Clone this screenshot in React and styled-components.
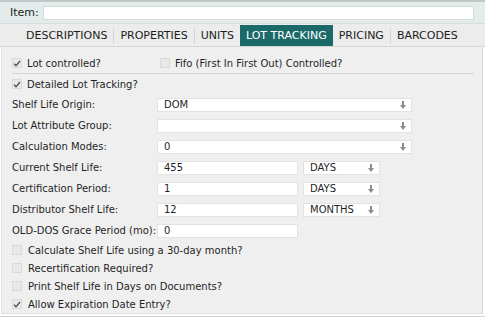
import React from "react"
import styled, { createGlobalStyle } from "styled-components"

const GlobalStyle = createGlobalStyle`
  html, body {
    margin: 0;
    padding: 0;
    background: #ffffff;
  }
  body {
    font-family: "DejaVu Sans", Verdana, sans-serif;
    color: #1f1f1f;
  }
`

const tabs = ["DESCRIPTIONS", "PROPERTIES", "UNITS", "LOT TRACKING", "PRICING", "BARCODES"]
const activeTab = "LOT TRACKING"

const fields = [
  { label: "Shelf Life Origin:", kind: "select", value: "DOM" },
  { label: "Lot Attribute Group:", kind: "select", value: "" },
  { label: "Calculation Modes:", kind: "select", value: "0" },
  { label: "Current Shelf Life:", kind: "input", value: "455", unit: "DAYS" },
  { label: "Certification Period:", kind: "input", value: "1", unit: "DAYS" },
  { label: "Distributor Shelf Life:", kind: "input", value: "12", unit: "MONTHS" },
  { label: "OLD-DOS Grace Period (mo):", kind: "input", value: "0" },
]

const options = [
  { label: "Calculate Shelf Life using a 30-day month?", checked: false },
  { label: "Recertification Required?", checked: false },
  { label: "Print Shelf Life in Days on Documents?", checked: false },
  { label: "Allow Expiration Date Entry?", checked: true },
]

const DownArrow = () => (
  <svg width="6" height="8" viewBox="0 0 6 8">
    <rect x="2" y="0" width="2" height="4" fill="#8c8c8c" />
    <polygon points="0,4 6,4 3,8" fill="#8c8c8c" />
  </svg>
)

const CheckBox = ({ checked }) => (
  <Box>
    {checked && (
      <svg width="8" height="7" viewBox="0 0 8 7">
        <polyline points="1,3.6 3,5.8 7,1" fill="none" stroke="#4a4a4a" strokeWidth="1.3" />
      </svg>
    )}
  </Box>
)

const App = () => {
  return (
    <Screen>
      <GlobalStyle />
      <Header>
        <ItemLabel>Item:</ItemLabel>
        <ItemInput />
      </Header>

      <TabBar>
        {tabs.map((t, i) => {
          const prev = tabs[i - 1]
          const showSep = i > 0 && t !== activeTab && prev !== activeTab
          return (
            <React.Fragment key={t}>
              {showSep && <TabSep />}
              <Tab $active={t === activeTab}>{t}</Tab>
            </React.Fragment>
          )
        })}
      </TabBar>

      <Panel>
        <TopRow>
          <CheckRow>
            <CheckBox checked />
            <span>Lot controlled?</span>
          </CheckRow>
          <CheckRow>
            <CheckBox />
            <span>Fifo (First In First Out) Controlled?</span>
          </CheckRow>
        </TopRow>
        <Rule />
        <CheckRow>
          <CheckBox checked />
          <span>Detailed Lot Tracking?</span>
        </CheckRow>

        <Fields>
          {fields.map((f) => (
            <FieldRow key={f.label}>
              <FieldLabel>{f.label}</FieldLabel>
              {f.kind === "select" ? (
                <Select $width={255}>
                  <span>{f.value}</span>
                  <DownArrow />
                </Select>
              ) : (
                <Controls>
                  <TextBox>{f.value}</TextBox>
                  {f.unit && (
                    <Select $width={77}>
                      <span>{f.unit}</span>
                      <DownArrow />
                    </Select>
                  )}
                </Controls>
              )}
            </FieldRow>
          ))}
        </Fields>

        {options.map((o) => (
          <CheckRow key={o.label} $wide>
            <CheckBox checked={o.checked} />
            <span>{o.label}</span>
          </CheckRow>
        ))}
      </Panel>
    </Screen>
  )
}

const Screen = styled.div`
  width: 485px;
  height: 317px;
  box-sizing: border-box;
  border-top: 2px solid #c3c6c6;
  border-bottom: 1px solid #d2d2d2;
  padding-bottom: 2px;
  background: #ffffff;
  display: flex;
  flex-direction: column;
  overflow: hidden;
`

const Header = styled.div`
  height: 21px;
  flex: none;
  display: flex;
  align-items: center;
  padding: 0 11px 0 10px;
  background: #e4eceb;
  border-bottom: 1px solid #d6dddc;
`

const ItemLabel = styled.span`
  font-size: 11px;
  color: #1c1c1c;
  width: 33px;
  flex: none;
`

const ItemInput = styled.div`
  flex: 1;
  height: 14px;
  box-sizing: border-box;
  background: #ffffff;
  border: 1px solid #d3dcdb;
`

const TabBar = styled.div`
  height: 22px;
  flex: none;
  display: flex;
  align-items: flex-end;
  padding-left: 20px;
  background: #ececec;
  border-bottom: 1px solid #d7d7d7;
`

const Tab = styled.div`
  height: 21px;
  display: flex;
  align-items: center;
  padding: 0 6px;
  font-size: 11px;
  color: ${(p) => (p.$active ? "#ffffff" : "#1c1c1c")};
  background: ${(p) => (p.$active ? "#1b6a69" : "transparent")};
  white-space: nowrap;
`

const TabSep = styled.div`
  width: 1px;
  height: 16px;
  margin-bottom: 2px;
  background: #d3d3d3;
  flex: none;
`

const Panel = styled.div`
  flex: 1;
  margin: 0 2px 0 1px;
  padding: 7px 0 0 10px;
  background: #efefef;
  border-left: 1px solid #e2e2e2;
  border-right: 1px solid #d9d9d9;
  border-bottom: 1px solid #dedede;
  display: flex;
  flex-direction: column;
`

const TopRow = styled.div`
  display: grid;
  grid-template-columns: 148px 1fr;
`

const CheckRow = styled.div`
  height: 18px;
  display: flex;
  align-items: center;
  gap: ${(p) => (p.$wide ? "6px" : "5px")};
  font-size: 10px;
  color: #1f1f1f;
  white-space: nowrap;
`

const Box = styled.div`
  width: 10px;
  height: 10px;
  box-sizing: border-box;
  flex: none;
  display: flex;
  align-items: center;
  justify-content: center;
  background: #e8e8e8;
  border: 1px solid #dadada;
`

const Rule = styled.div`
  height: 1px;
  margin: 1px 8px 1px 0;
  background: #d6d6d6;
`

const Fields = styled.div`
  margin-top: 1px;
  display: flex;
  flex-direction: column;
`

const FieldRow = styled.div`
  height: 21px;
  display: grid;
  grid-template-columns: 145px 1fr;
  align-items: center;
`

const FieldLabel = styled.span`
  font-size: 10px;
  color: #1f1f1f;
  white-space: nowrap;
`

const Controls = styled.div`
  display: flex;
  gap: 5px;
`

const fieldBase = `
  height: 14px;
  box-sizing: border-box;
  display: flex;
  align-items: center;
  padding-left: 6px;
  background: #ffffff;
  border: 1px solid #e3e3e3;
  font-size: 10px;
  color: #1f1f1f;
`

const TextBox = styled.div`
  ${fieldBase}
  width: 141px;
`

const Select = styled.div`
  ${fieldBase}
  width: ${(p) => p.$width}px;
  justify-content: space-between;
  padding-right: 5px;
`

export default App
